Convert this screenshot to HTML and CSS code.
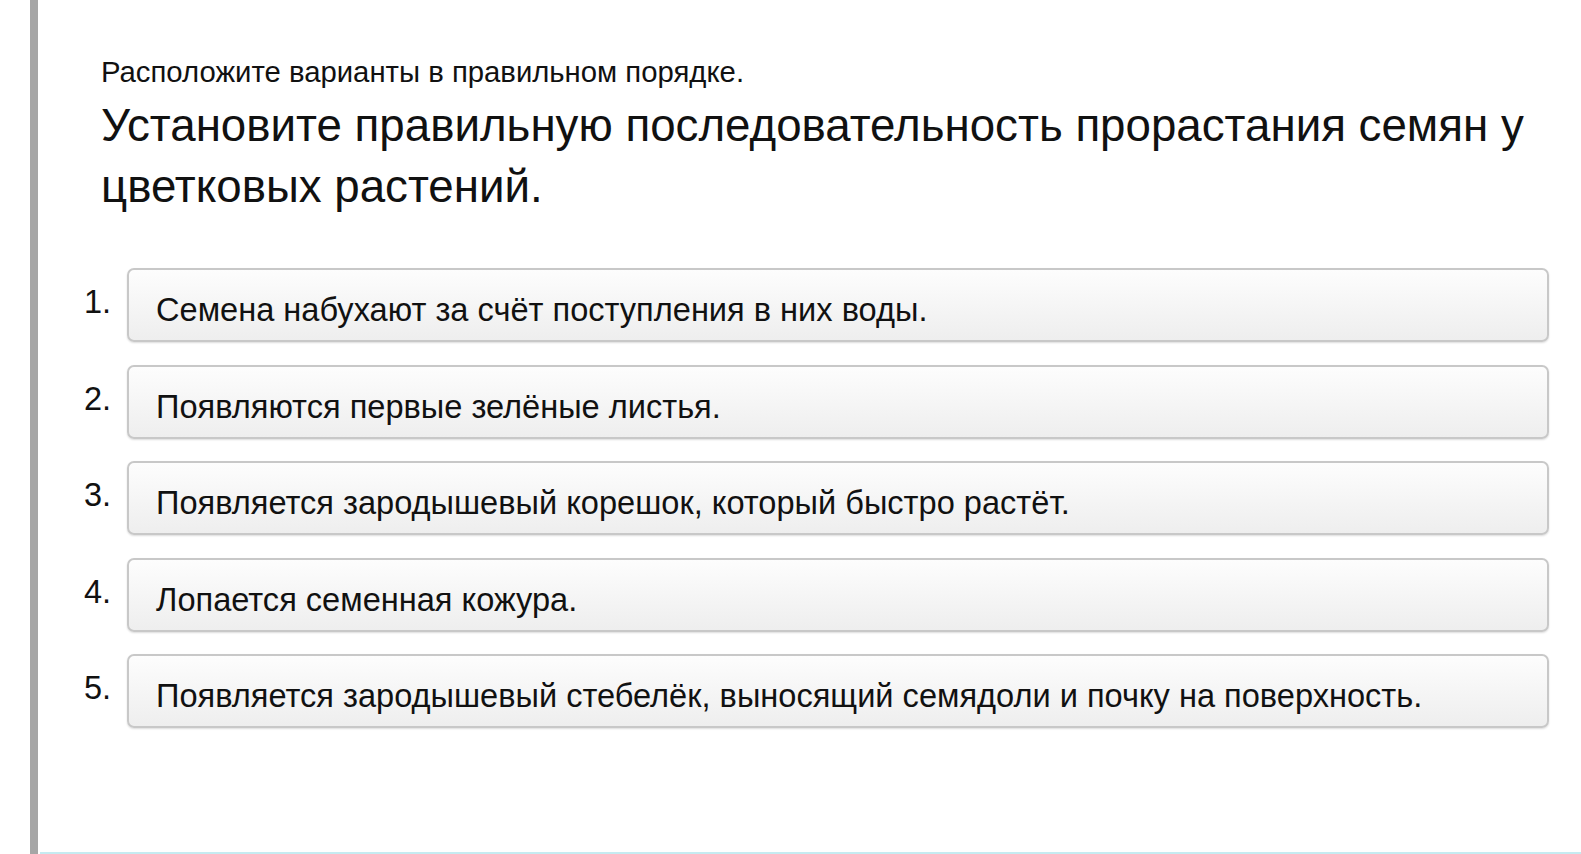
FILE: index.html
```html
<!DOCTYPE html>
<html lang="ru">
<head>
    <meta charset="UTF-8">
    <title>Порядок прорастания семян</title>
    <link rel="stylesheet" href="styles.css">
</head>
<body>
    <div class="question">
        <p class="hint">Расположите варианты в правильном порядке.</p>
        <h1 class="title">Установите правильную последовательность прорастания семян у цветковых растений.</h1>

        <!-- Список вариантов для сортировки -->
        <ol class="answers">
            <li class="answer">
                <span class="num">1.</span>
                <div class="card">Семена набухают за счёт поступления в них воды.</div>
            </li>
            <li class="answer">
                <span class="num">2.</span>
                <div class="card">Появляются первые зелёные листья.</div>
            </li>
            <li class="answer">
                <span class="num">3.</span>
                <div class="card">Появляется зародышевый корешок, который быстро растёт.</div>
            </li>
            <li class="answer">
                <span class="num">4.</span>
                <div class="card">Лопается семенная кожура.</div>
            </li>
            <li class="answer">
                <span class="num">5.</span>
                <div class="card">Появляется зародышевый стебелёк, выносящий семядоли и почку на поверхность.</div>
            </li>
        </ol>
    </div>
</body>
</html>
```

FILE: styles.css
```css
html, body {
    margin: 0;
    height: 100%;
    background: #fff;
}

body {
    font-family: "Liberation Sans", Arial, sans-serif;
    color: #111;
    padding-left: 30px;
    box-sizing: border-box;
}

/* Блок вопроса: серая полоса слева, голубая линия снизу */
.question {
    box-sizing: border-box;
    height: 854px;
    border-left: 8px solid #a6a6a6;
    padding: 55px 32px 0 63px;
    background: linear-gradient(#c6ebf1, #c6ebf1) no-repeat left 2px bottom / 100% 2px;
}

.hint {
    margin: 0;
    font-size: 29.3px;
    line-height: 34px;
}

.title {
    margin: 6px 0 0;
    font-size: 45.7px;
    font-weight: normal;
    line-height: 61px;
}

.answers {
    list-style: none;
    margin: 51px 0 0;
    padding: 0;
}

.answer {
    display: flex;
    align-items: flex-start;
    margin-bottom: 22.5px;
}

.num {
    width: 40px;
    margin-left: -30px;
    margin-right: 16px;
    padding-top: 14px;
    font-size: 32.5px;
    line-height: 40px;
    text-align: right;
}

/* Карточка варианта */
.card {
    flex: 1;
    box-sizing: border-box;
    height: 74px;
    padding: 20px 0 0 27px;
    font-size: 32.6px;
    line-height: 40px;
    border: 2px solid #c8c8c8;
    border-radius: 7px;
    background: linear-gradient(#fdfdfd, #eeeeee);
    box-shadow: 0 1px 2px rgba(0, 0, 0, 0.14);
}
```
